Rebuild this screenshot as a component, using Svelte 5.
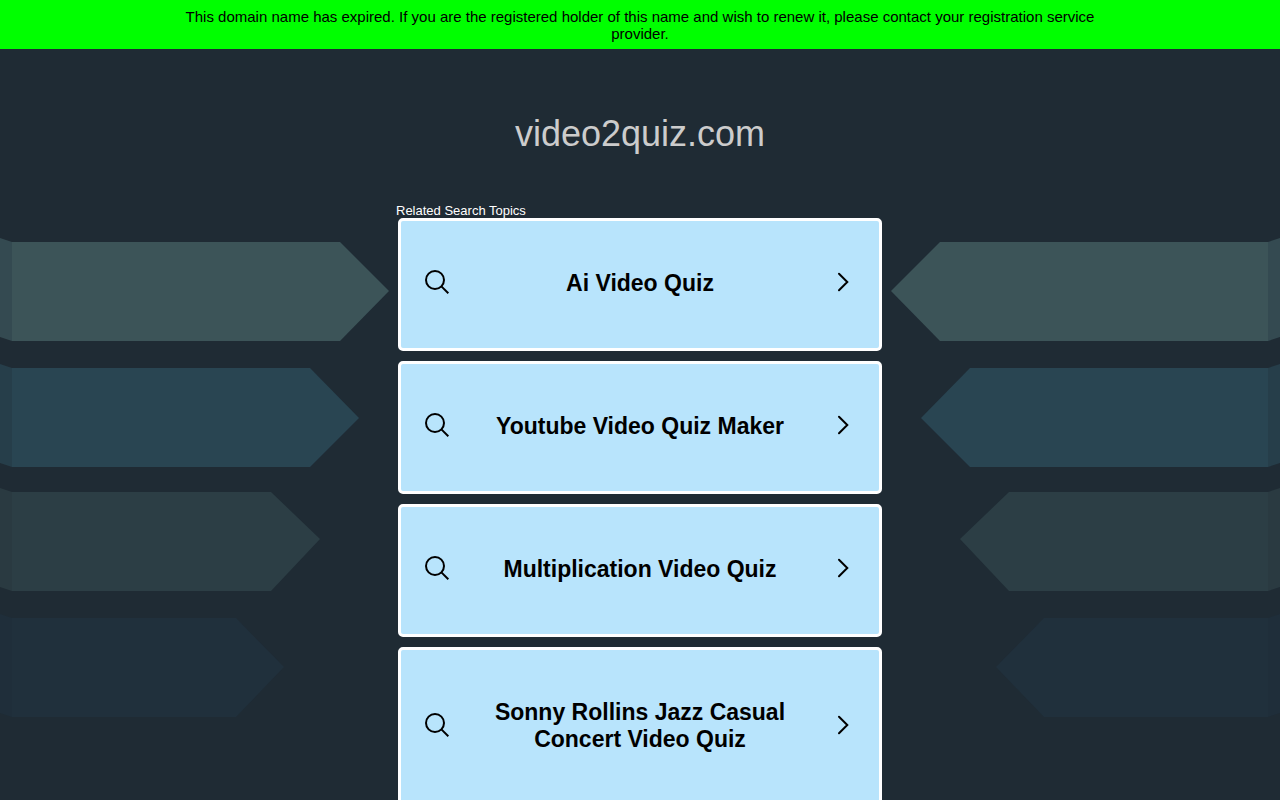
<script lang="ts">
    const domain = 'video2quiz.com';

    const topics = [
        'Ai Video Quiz',
        'Youtube Video Quiz Maker',
        'Multiplication Video Quiz',
        'Sonny Rollins Jazz Casual Concert Video Quiz'
    ];

    // top edge, shoulder, tip and colours of each ribbon
    const ribbons = [
        { y: 39, shoulder: 340, tip: 389, tipY: 88, face: '#3c5458', fold: '#344a51' },
        { y: 165, shoulder: 310, tip: 359, tipY: 215, face: '#294552', fold: '#263e4a' },
        { y: 289, shoulder: 271, tip: 320, tipY: 336, face: '#2c3e45', fold: '#2a3a41' },
        { y: 415, shoulder: 236, tip: 284, tipY: 464, face: '#20303c', fold: '#1f2e3a' }
    ];
</script>

<svelte:head>
    <title>{domain}</title>
</svelte:head>

{#snippet ribbonArt()}
    {#each ribbons as r}
        <polygon points="0,{r.y - 4} 12,{r.y} 12,{r.y + 99} 0,{r.y + 95}" fill={r.fold} />
        <polygon
            points="12,{r.y} {r.shoulder},{r.y} {r.tip},{r.tipY} {r.shoulder},{r.y + 99} 12,{r.y + 99}"
            fill={r.face}
        />
    {/each}
{/snippet}

<div class="banner">
    <p>
        This domain name has expired. If you are the registered holder of this name and wish to
        renew it, please contact your registration service provider.
    </p>
</div>

<h1>{domain}</h1>

<div class="content">
    <div class="side">
        <svg width="390" height="520" viewBox="0 0 390 520" aria-hidden="true">
            {@render ribbonArt()}
        </svg>
    </div>

    <main>
        <h2>Related Search Topics</h2>
        <ul>
            {#each topics as topic}
                <li>
                    <a href="#search">
                        <svg class="icon" width="24" height="24" viewBox="0 0 24 24" aria-hidden="true">
                            <circle cx="10" cy="10" r="9" />
                            <path d="M16.4 16.4 23.3 23.3" />
                        </svg>
                        <span>{topic}</span>
                        <svg class="icon" width="24" height="24" viewBox="0 0 24 24" aria-hidden="true">
                            <path d="M8 3.8 16.3 12 8 20.2" stroke-linecap="round" />
                        </svg>
                    </a>
                </li>
            {/each}
        </ul>
    </main>

    <div class="side right">
        <svg width="390" height="520" viewBox="0 0 390 520" aria-hidden="true">
            {@render ribbonArt()}
        </svg>
    </div>
</div>

<style>
    :global(body) {
        background: #1f2b34;
        font-family: "Liberation Sans", Arial, sans-serif;
    }

    .banner {
        background: #00ff00;
        color: #000;
        padding: 8px 0 7px;
        font-size: 15px;
        line-height: 17px;
        text-align: center;
    }

    .banner p {
        width: 75%;
        margin: 0 auto;
    }

    h1 {
        margin: 64px 0 48px;
        color: #cccccc;
        font-size: 36px;
        font-weight: normal;
        line-height: 42px;
        text-align: center;
    }

    .content {
        display: grid;
        grid-template-columns: minmax(0, 1fr) minmax(0, 484px) minmax(0, 1fr);
    }

    .side {
        display: flex;
        overflow: hidden;
    }

    .side svg {
        flex: none;
    }

    .side.right {
        justify-content: flex-end;
    }

    .side.right svg {
        transform: scaleX(-1);
    }

    h2 {
        margin: 0 0 0 -2px;
        color: #fff;
        font-size: 13px;
        font-weight: normal;
        line-height: 15px;
    }

    ul {
        display: flex;
        flex-direction: column;
        gap: 10px;
        margin: 0;
        padding: 0 0 10px;
        list-style: none;
    }

    a {
        display: flex;
        align-items: center;
        gap: 32px;
        padding: 49px 24px 51px;
        border: 3px solid #fff;
        border-radius: 5px;
        background: #b8e4fc;
        color: #000;
        text-decoration: none;
    }

    a:hover {
        background: #d2eefd;
    }

    a span {
        flex: 1;
        font-size: 23px;
        font-weight: bold;
        line-height: 27px;
        text-align: center;
    }

    .icon {
        flex: none;
        margin-bottom: 3px;
        fill: none;
        stroke: #000;
        stroke-width: 2;
    }
</style>
